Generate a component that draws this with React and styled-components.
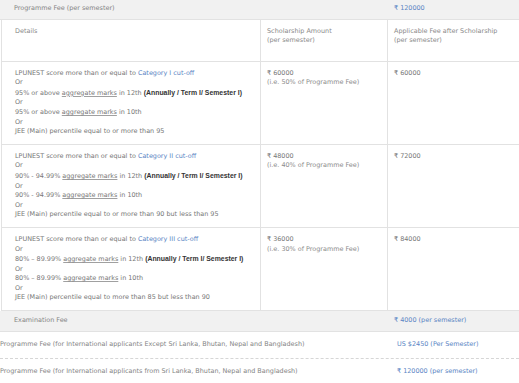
import React from "react";
import styled, { createGlobalStyle } from "styled-components";

const GlobalStyle = createGlobalStyle`
  html, body { margin: 0; padding: 0; background: #ffffff; }
  body {
    font-family: "DejaVu Sans", "Noto Sans", sans-serif;
    font-size: 6.45px;
    line-height: 9.6px;
    color: #777777;
  }
`;

const Page = styled.div`
  width: 519px;
  height: 383px;
  overflow: hidden;
  background: #fff;
`;

const FeeBar = styled.div`
  display: grid;
  grid-template-columns: 388px 1fr;
  background: #f1f1f1;
  border-bottom: 1px solid #e2e2e2;
  padding: ${(p) => p.$pad || "4px 0 5px"};
`;

const BarLabel = styled.div`
  padding-left: 14px;
  color: #858585;
  white-space: nowrap;
`;

const BarValue = styled.div`
  padding-left: 6px;
  color: #5a85c4;
  white-space: nowrap;
`;

const Table = styled.div`
  display: grid;
  grid-template-columns: 259px 127px 1fr;
  margin-left: 1px;
  border-left: 1px solid #e2e2e2;
`;

const Cell = styled.div`
  border-bottom: 1px solid #e2e2e2;
  border-right: ${(p) => (p.$last ? "none" : "1px solid #e2e2e2")};
  padding: 7px 6px 7px ${(p) => (p.$first ? "13px" : "6px")};
  min-height: ${(p) => (p.$head ? "27px" : "0")};
  color: ${(p) => (p.$head ? "#8a8a8a" : "#777")};
  overflow: hidden;
`;

const Line = styled.div`
  white-space: nowrap;
`;

const Muted = styled.div`
  color: #8c8c8c;
  white-space: nowrap;
`;

const Link = styled.span`
  color: #5a85c4;
`;

const Under = styled.span`
  text-decoration: underline;
  text-decoration-color: #a0a0a0;
  text-underline-offset: 1px;
`;

const Strong = styled.strong`
  font-family: "Liberation Sans", Arial, sans-serif;
  color: #333;
  font-weight: 700;
  font-size: 6.9px;
`;

const IntlRow = styled.div`
  display: grid;
  grid-template-columns: 391px 1fr;
  padding: 8px 0 9px;
  border-bottom: 1px dashed #d6d6d6;
  color: #858585;
`;

const IntlLabel = styled.div`
  white-space: nowrap;
  overflow: hidden;
`;

const IntlValue = styled.div`
  padding-left: 6px;
  color: #5a85c4;
  white-space: nowrap;
`;

const rows = [
  {
    cat: "Category I cut-off",
    m12: "95% or above",
    m10: "95% or above",
    jee: "JEE (Main) percentile equal to or more than 95",
    amt: "60000",
    pct: "50",
    fee: "60000",
  },
  {
    cat: "Category II cut-off",
    m12: "90% - 94.99%",
    m10: "90% - 94.99%",
    jee: "JEE (Main) percentile equal to or more than 90 but less than 95",
    amt: "48000",
    pct: "40",
    fee: "72000",
  },
  {
    cat: "Category III cut-off",
    m12: "80% – 89.99%",
    m10: "80% – 89.99%",
    jee: "JEE (Main) percentile equal to more than 85 but less than 90",
    amt: "36000",
    pct: "30",
    fee: "84000",
  },
];

export default function App() {
  return (
    <Page>
      <GlobalStyle />
      <FeeBar>
        <BarLabel>Programme Fee (per semester)</BarLabel>
        <BarValue>₹ 120000</BarValue>
      </FeeBar>
      <Table>
        <Cell $first $head>
          <Line>Details</Line>
        </Cell>
        <Cell $head>
          <Line>Scholarship Amount</Line>
          <Line>(per semester)</Line>
        </Cell>
        <Cell $head $last>
          <Line>Applicable Fee after Scholarship</Line>
          <Line>(per semester)</Line>
        </Cell>
        {rows.map((r) => (
          <React.Fragment key={r.cat}>
            <Cell $first>
              <Line>
                LPUNEST score more than or equal to <Link>{r.cat}</Link>
              </Line>
              <Line>Or</Line>
              <Line>
                {r.m12} <Under>aggregate marks</Under> in 12th{" "}
                <Strong>(Annually / Term I/ Semester I)</Strong>
              </Line>
              <Line>Or</Line>
              <Line>
                {r.m10} <Under>aggregate marks</Under> in 10th
              </Line>
              <Line>Or</Line>
              <Line>{r.jee}</Line>
            </Cell>
            <Cell>
              <Line>₹ {r.amt}</Line>
              <Muted>(i.e. {r.pct}% of Programme Fee)</Muted>
            </Cell>
            <Cell $last>
              <Line>₹ {r.fee}</Line>
            </Cell>
          </React.Fragment>
        ))}
      </Table>
      <FeeBar $pad="5px 0 5px">
        <BarLabel>Examination Fee</BarLabel>
        <BarValue>₹ 4000 (per semester)</BarValue>
      </FeeBar>
      <IntlRow>
        <IntlLabel>
          Programme Fee (for International applicants Except Sri Lanka, Bhutan, Nepal and Bangladesh)
        </IntlLabel>
        <IntlValue>US $2450 (Per Semester)</IntlValue>
      </IntlRow>
      <IntlRow>
        <IntlLabel>
          Programme Fee (for International applicants from Sri Lanka, Bhutan, Nepal and Bangladesh)
        </IntlLabel>
        <IntlValue>₹ 120000 (per semester)</IntlValue>
      </IntlRow>
    </Page>
  );
}
